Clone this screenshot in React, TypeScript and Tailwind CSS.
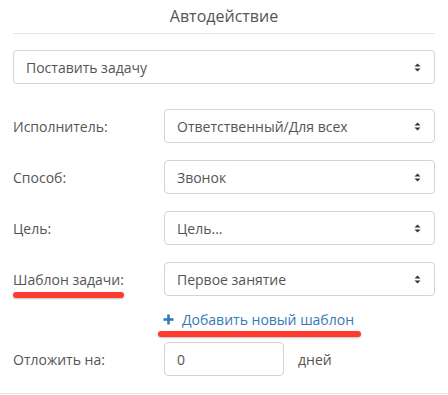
import React from "react";

const Arrows = () => (
  <svg width="7" height="9" viewBox="0 0 7 9" className="shrink-0">
    <polygon points="0.5,3.6 3.5,0.4 6.5,3.6" fill="#333" />
    <polygon points="0.5,5.4 3.5,8.6 6.5,5.4" fill="#333" />
  </svg>
);

const Select = ({ value, className = "" }: { value: string; className?: string }) => (
  <div
    className={`h-[34px] flex items-center justify-between pl-[12px] pr-[13px] border border-[#d4d4d4] rounded-[4px] bg-white text-[#555] ${className}`}
  >
    <span>{value}</span>
    <Arrows />
  </div>
);

const Row = ({ label, children, marked = false }: { label: string; children: React.ReactNode; marked?: boolean }) => (
  <div className="flex items-center">
    <div className="w-[151px] shrink-0 relative">
      <span>{label}</span>
      {marked && (
        <div className="absolute left-0 top-[23px] w-[111px] h-[6px] rounded-full bg-[#ff3a2f] shadow-[0_1px_2px_rgba(0,0,0,0.25)]" />
      )}
    </div>
    {children}
  </div>
);

export default function App() {
  return (
    <div
      className="w-[448px] h-[395px] bg-white text-[14px] text-[#555] overflow-hidden"
      style={{ fontFamily: '"Open Sans", "Liberation Sans", sans-serif' }}
    >
      <div className="mx-[13px] h-[34px] flex items-center justify-center border-b border-[#e5e5e5] text-[16px] pb-[2px]">
        Автодействие
      </div>
      <div className="px-[13px]">
        <Select value="Поставить задачу" className="mt-[16px]" />
        <div className="mt-[25px] flex flex-col gap-[17px]">
          <Row label="Исполнитель:">
            <Select value="Ответственный/Для всех" className="flex-1" />
          </Row>
          <Row label="Способ:">
            <Select value="Звонок" className="flex-1" />
          </Row>
          <Row label="Цель:">
            <Select value="Цель..." className="flex-1" />
          </Row>
          <Row label="Шаблон задачи:" marked>
            <Select value="Первое занятие" className="flex-1" />
          </Row>
        </div>
        <div className="pl-[150px] h-[46px] flex items-center">
          <div className="relative flex items-center text-[#337ab7] pt-[1px]">
            <svg width="11" height="11" viewBox="0 0 11 11" className="mr-[8px]">
              <line x1="5.5" y1="0.5" x2="5.5" y2="10.5" stroke="#337ab7" strokeWidth="2.6" />
              <line x1="0.5" y1="5.5" x2="10.5" y2="5.5" stroke="#337ab7" strokeWidth="2.6" />
            </svg>
            <span>Добавить новый шаблон</span>
            <div className="absolute left-[-5px] top-[23px] w-[203px] h-[6px] rounded-full bg-[#ff3a2f] shadow-[0_1px_2px_rgba(0,0,0,0.25)]" />
          </div>
        </div>
        <div className="flex items-center">
          <div className="w-[151px] shrink-0">Отложить на:</div>
          <div className="w-[120px] h-[34px] flex items-center px-[12px] border border-[#d4d4d4] rounded-[4px]">0</div>
          <div className="ml-[14px]">дней</div>
        </div>
      </div>
      <div className="mt-[17px] border-t border-[#e5e5e5]" />
    </div>
  );
}
